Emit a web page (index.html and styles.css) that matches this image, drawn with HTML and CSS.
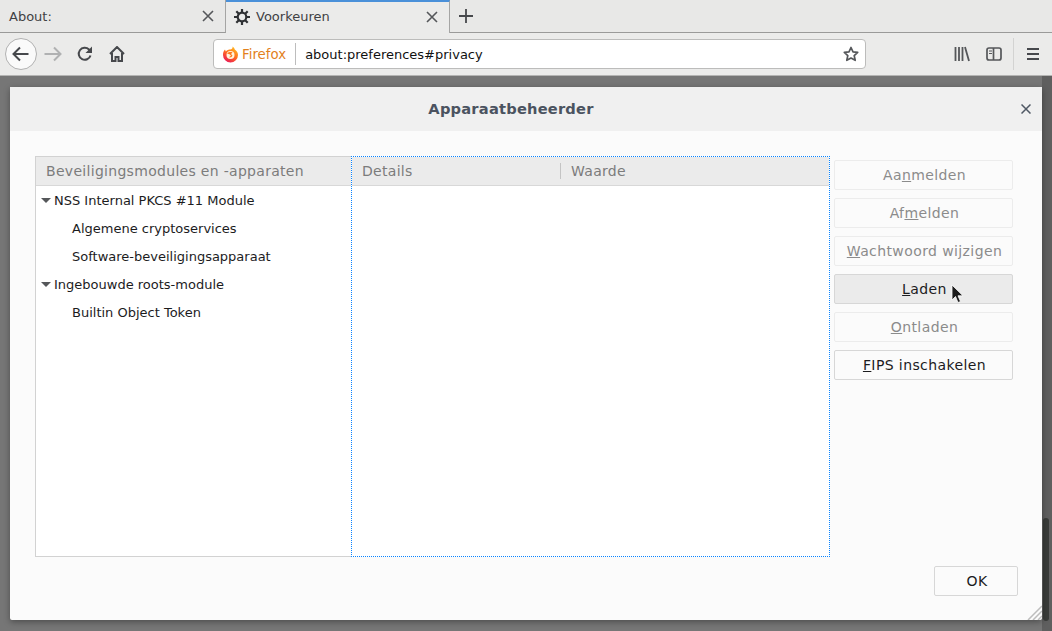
FILE: index.html
```html
<!DOCTYPE html>
<html lang="nl">
<head>
<meta charset="UTF-8">
<title>Voorkeuren</title>
<link rel="stylesheet" href="styles.css">
</head>
<body>

<div class="tabbar">
  <div class="tab">
    <span class="tab-title">About:</span>
    <svg class="tab-close" width="12" height="12" viewBox="0 0 12 12"><path d="M1 1l10 10M11 1L1 11" stroke="#55575a" stroke-width="1.6" fill="none"/></svg>
  </div>
  <div class="tab tab-active">
    <svg class="gear" width="16" height="16" viewBox="0 0 16 16">
      <circle cx="8" cy="8" r="4.300" fill="none" stroke="#2f3134" stroke-width="2.200"/>
      <path d="M8 0v3.500M8 12.500V16M0 8h3.500M12.500 8H16M2.300 2.300l2.500 2.500M11.200 11.200l2.500 2.500M13.700 2.300l-2.500 2.500M4.800 11.200l-2.500 2.500" stroke="#2f3134" stroke-width="2.200" fill="none"/>
    </svg>
    <span class="tab-title">Voorkeuren</span>
    <svg class="tab-close" width="12" height="12" viewBox="0 0 12 12"><path d="M1 1l10 10M11 1L1 11" stroke="#55575a" stroke-width="1.6" fill="none"/></svg>
  </div>
  <div class="new-tab">
    <svg width="14" height="14" viewBox="0 0 14 14"><path d="M7 0v14M0 7h14" stroke="#46484c" stroke-width="1.8" fill="none"/></svg>
  </div>
</div>

<div class="toolbar">
  <div class="back-btn">
    <svg width="18" height="16" viewBox="0 0 18 16"><path d="M1.500 8h15M8 1.500L1.500 8 8 14.500" stroke="#46484c" stroke-width="2" fill="none"/></svg>
  </div>
  <svg class="tool-icon forward" width="18" height="16" viewBox="0 0 18 16"><path d="M0.500 8h15M10 1.500L16.500 8 10 14.500" stroke="#b0b1b2" stroke-width="2" fill="none"/></svg>
  <svg class="tool-icon reload" width="16" height="16" viewBox="0 0 16 16"><path d="M13.500 9.500A6 6 0 1 1 12 3.500L14 5.500" stroke="#46484c" stroke-width="2" fill="none"/><path d="M15 0.500v6.500H8.500z" fill="#46484c"/></svg>
  <svg class="tool-icon home" width="16" height="16" viewBox="0 0 16 16"><path d="M1 8l7-7 7 7M3 7v8h3.500v-4h3v4H13V7" stroke="#46484c" stroke-width="2" fill="none"/></svg>

  <div class="urlbar">
    <svg class="fx-logo" width="17" height="17" viewBox="0 0 17 17">
      <defs>
        <linearGradient id="fxFill" x1="0.800" y1="0" x2="0.200" y2="1">
          <stop offset="0" stop-color="#ffc21f"/>
          <stop offset="0.500" stop-color="#ff6a1f"/>
          <stop offset="1" stop-color="#e8125c"/>
        </linearGradient>
      </defs>
      <path d="M10.500 0.500C12 1.500 12.500 2.500 12.800 3.500 15 5 16 7 16 9a7.500 7.500 0 0 1-15 0C1 7 1.500 5 3 3.500L3.800 5.500C5 4 7 3.500 8 3.500 10 3.500 11 2 10.500 0.500z" fill="url(#fxFill)"/>
      <circle cx="8.500" cy="9" r="4" fill="#fff4dc"/>
      <path d="M5 7.500C6.500 6 9 5.700 10.500 6.500L9 8l1.500 1.500C10 11 8.500 11.800 7 11.300L9 9.500 7.500 8.200z" fill="#ff7a1f"/>
    </svg>
    <span class="fx-label">Firefox</span>
    <span class="url-sep"></span>
    <span class="url-text">about:preferences#privacy</span>
    <svg class="star" width="16" height="16" viewBox="0 0 16 16"><path d="M8 1.500l2 4.300 4.700 0.600-3.500 3.200 1 4.700L8 12l-4.200 2.300 1-4.700-3.500-3.200 4.700-0.600z" stroke="#55575a" stroke-width="1.700" fill="none" stroke-linejoin="round"/></svg>
  </div>

  <svg class="tool-icon library" width="16" height="16" viewBox="0 0 16 16"><path d="M1.500 1v14M5 1v14M8.500 1v14M11 1l4 14" stroke="#55575a" stroke-width="1.800" fill="none"/></svg>
  <svg class="tool-icon sidebar" width="16" height="16" viewBox="0 0 16 16"><rect x="1" y="2" width="14" height="12" rx="2" fill="none" stroke="#55575a" stroke-width="1.700"/><path d="M7.500 2v12" stroke="#55575a" stroke-width="1.700"/><path d="M3 5h3M3 7.500h3" stroke="#55575a" stroke-width="1.200"/></svg>
  <span class="tool-sep"></span>
  <svg class="tool-icon menu" width="14" height="14" viewBox="0 0 14 14"><path d="M1 2h12M1 7h12M1 12h12" stroke="#46484c" stroke-width="1.800" fill="none"/></svg>
</div>

<div class="page">
  <div class="page-scroll"><span class="page-thumb"></span></div>
  <div class="dialog">
    <div class="dialog-head">
      <span class="dialog-title">Apparaatbeheerder</span>
      <svg class="dialog-close" width="10" height="10" viewBox="0 0 10 10"><path d="M0.500 0.500l9 9M9.500 0.500l-9 9" stroke="#4f5864" stroke-width="1.500" fill="none"/></svg>
    </div>
    <div class="dialog-body">
      <div class="panes">
        <div class="tree-pane">
          <div class="col-head"><span class="col-cell">Beveiligingsmodules en -apparaten</span></div>
          <ul class="tree">
            <li class="tree-row"><span class="twisty"></span>NSS Internal PKCS #11 Module</li>
            <li class="tree-row tree-child">Algemene cryptoservices</li>
            <li class="tree-row tree-child">Software-beveiligingsapparaat</li>
            <li class="tree-row"><span class="twisty"></span>Ingebouwde roots-module</li>
            <li class="tree-row tree-child">Builtin Object Token</li>
          </ul>
        </div>
        <div class="detail-pane">
          <div class="col-head">
            <span class="col-cell col-details">Details</span>
            <span class="col-cell col-value">Waarde</span>
          </div>
        </div>
      </div>
      <div class="actions">
        <button class="btn" disabled>Aa<u>n</u>melden</button>
        <button class="btn" disabled>Af<u>m</u>elden</button>
        <button class="btn" disabled><u>W</u>achtwoord wijzigen</button>
        <button class="btn btn-hover"><u>L</u>aden</button>
        <button class="btn" disabled><u>O</u>ntladen</button>
        <button class="btn"><u>F</u>IPS inschakelen</button>
      </div>
    </div>
    <div class="dialog-foot">
      <button class="btn btn-ok">OK</button>
    </div>
    <svg class="grip" width="15" height="15" viewBox="0 0 15 15"><path d="M1 15L15 1M6 15l9-9M11 15l4-4" stroke="#bdbdbd" stroke-width="1.500" fill="none"/></svg>
  </div>
  <svg class="cursor" width="13" height="20" viewBox="0 0 13 20"><path d="M1 1v15l3.500-3.500 2.500 6 2.500-1-2.500-5.700H12z" fill="#1c1c1c" stroke="#fff" stroke-width="0.800"/></svg>
</div>

</body>
</html>
```

FILE: styles.css
```css
* {
  box-sizing: border-box;
}
html, body {
  margin: 0;
  height: 631px;
  overflow: hidden;
}
body {
  font-family: "DejaVu Sans", sans-serif;
  font-size: 13px;
  color: #1c1c1e;
  background: #757575;
}
.tabbar {
  display: flex;
  height: 33px;
  background: #e8e8e7;
  border-bottom: 1px solid #9a9a99;
}
.tab {
  display: flex;
  align-items: center;
  width: 226px;
  height: 33px;
  padding: 0 11px 0 9px;
  color: #3f4144;
  border-right: 1px solid #a5a5a4;
  border-bottom: 1px solid #9a9a99;
}
.tab-title {
  flex: 1;
}
.tab-active {
  width: 224px;
  padding: 0 11px 2px 8px;
  background: #ebebea;
  border-top: 2px solid #4a90d9;
  border-bottom: none;
}
.gear {
  margin-right: 6px;
}
.new-tab {
  display: flex;
  align-items: center;
  padding: 0 0 1px 9px;
}
.toolbar {
  display: flex;
  align-items: center;
  height: 43px;
  background: #ebebea;
  border-bottom: 1px solid #b4b4b3;
}
.back-btn {
  display: flex;
  align-items: center;
  justify-content: center;
  width: 32px;
  height: 32px;
  margin-left: 5px;
  background: #fafafa;
  border: 1px solid #b1b1b1;
  border-radius: 50%;
}
.forward {
  margin-left: 7px;
}
.reload {
  margin-left: 15px;
}
.home {
  margin-left: 16px;
}
.urlbar {
  display: flex;
  align-items: center;
  width: 653px;
  height: 30px;
  margin-left: 88px;
  padding: 0 6px 0 8px;
  background: #fff;
  border: 1px solid #bcbcbb;
  border-radius: 4px;
}
.fx-logo {
  flex: none;
}
.fx-label {
  margin-left: 3px;
  font-size: 13.33px;
  color: #e2811d;
}
.url-sep {
  width: 1px;
  height: 22px;
  margin: 0 9px;
  background: #bdbdbd;
}
.url-text {
  flex: 1;
  color: #111;
}
.library {
  margin-left: 88px;
}
.sidebar {
  margin-left: 16px;
}
.tool-sep {
  width: 1px;
  height: 32px;
  margin-left: 11px;
  background: #d3d3d2;
}
.menu {
  margin-left: 12px;
}
.page {
  position: relative;
  height: 555px;
  background: #767676;
}
.page-scroll {
  position: absolute;
  top: 0;
  right: 0;
  width: 10px;
  height: 100%;
  background: #5f5f5f;
}
.page-thumb {
  position: absolute;
  left: 1px;
  bottom: 10px;
  width: 6px;
  height: 103px;
  background: #393b39;
  border-radius: 3px;
}
.dialog {
  position: absolute;
  left: 10px;
  top: 11px;
  width: 1032px;
  height: 533px;
  display: flex;
  flex-direction: column;
  background: #fbfbfb;
  border-radius: 2px;
  box-shadow: 0 2px 6px rgba(0, 0, 0, 0.35);
}
.dialog-head {
  position: relative;
  display: flex;
  align-items: center;
  justify-content: center;
  height: 44px;
  flex: none;
  padding: 0 30px 2px 0;
  background: #f0f0f0;
}
.dialog-title {
  font-size: 14.67px;
  font-weight: bold;
  color: #4b5360;
  letter-spacing: 0.2px;
}
.dialog-close {
  position: absolute;
  right: 11px;
  top: 17px;
}
.dialog-body {
  display: flex;
  flex: 1;
  padding: 25px 29px 0 25px;
}
.panes {
  display: flex;
  height: 401px;
}
.tree-pane {
  width: 316px;
  background: #fff;
  border: 1px solid #d2d2d2;
  border-right: none;
}
.detail-pane {
  width: 479px;
  background: #fff;
  border: 1px dotted #0a84ff;
}
.col-head {
  display: flex;
  align-items: center;
  height: 29px;
  background: #ebebeb;
  border-bottom: 1px solid #d8d8d8;
  color: #7c7c7c;
  font-size: 14px;
  letter-spacing: 0.3px;
}
.col-cell {
  padding-left: 10px;
}
.col-details {
  width: 209px;
  border-right: 1px solid #c4c4c4;
}
.tree {
  list-style: none;
  margin: 0;
  padding: 0;
  color: #1c1c1e;
}
.tree-row {
  display: flex;
  align-items: center;
  height: 28px;
  padding-left: 5px;
}
.tree-child {
  padding-left: 36px;
}
.twisty {
  width: 0;
  height: 0;
  margin-right: 3px;
  border-style: solid;
  border-width: 5px 5px 0;
  border-color: #55575a transparent transparent;
}
.actions {
  display: flex;
  flex-direction: column;
  gap: 8px;
  width: 179px;
  margin-left: 4px;
  padding-top: 4px;
}
.btn {
  height: 30px;
  padding: 0 0 0 2px;
  font-family: inherit;
  font-size: 14px;
  letter-spacing: 0.4px;
  color: #1c1c1e;
  background: #fbfbfb;
  border: 1px solid #d7d7d7;
  border-radius: 2px;
}
.btn:disabled {
  color: #8b8b8b;
  border-color: #ececec;
}
.btn-hover {
  background: #ebebeb;
}
.dialog-foot {
  display: flex;
  justify-content: flex-end;
  flex: none;
  padding: 0 24px 24px 0;
}
.btn-ok {
  width: 84px;
}
.grip {
  position: absolute;
  right: 0;
  bottom: 0;
}
.cursor {
  position: absolute;
  left: 951px;
  top: 208px;
}
```
